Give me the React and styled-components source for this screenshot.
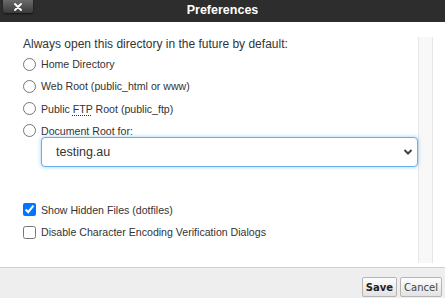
import React from "react";
import styled, { createGlobalStyle } from "styled-components";

const GlobalStyle = createGlobalStyle`
	html, body, #root {
		margin: 0;
		height: 100%;
	}
	body {
		font-family: "Liberation Sans", Arial, sans-serif;
		color: #333;
		background: #fff;
	}
`;

const Dialog = styled.div`
	display: flex;
	flex-direction: column;
	height: 100vh;
	overflow: hidden;
`;

//Title bar
const TitleBar = styled.div`
	display: grid;
	grid-template-columns: 1fr auto 1fr;
	align-items: start;
	height: 22px;
	background: #2d2d2d;
	flex-shrink: 0;
`;

const CloseButton = styled.button`
	justify-self: start;
	width: 30px;
	height: 13px;
	margin-left: 3px;
	padding: 0;
	border: 0;
	border-radius: 0 0 3px 3px;
	background: linear-gradient(#6a6a6a, #3a3a3a);
	box-shadow: 0 1px 2px rgba(0, 0, 0, 0.6);
	display: flex;
	align-items: center;
	justify-content: center;
	svg {
		display: block;
	}
`;

const Title = styled.h1`
	margin: 0;
	font-size: 12.5px;
	font-weight: bold;
	line-height: 21px;
	color: #fff;
`;

//Body
const Main = styled.div`
	flex: 1;
	display: flex;
	padding: 15px 0 4px;
	min-height: 0;
`;

const Content = styled.div`
	flex: 1;
	display: flex;
	flex-direction: column;
	padding-left: 23px;
`;

const Intro = styled.p`
	margin: 0;
	font-size: 12px;
	line-height: 14px;
`;

const Option = styled.label`
	display: flex;
	align-items: center;
	gap: 5px;
	min-height: 16px;
	margin-top: ${(p) => p.$gap || 6.3}px;
	font-size: 10.6px;
	input {
		width: 13px;
		height: 13px;
		margin: 0;
	}
`;

const Abbr = styled.abbr`
	text-decoration: underline dotted;
	text-underline-offset: 2px;
`;

const SelectWrap = styled.div`
	position: relative;
	margin: -2px 0 0 18px;
	svg {
		position: absolute;
		right: 5px;
		top: 11px;
		pointer-events: none;
	}
`;

const Select = styled.select`
	appearance: none;
	width: 100%;
	height: 30px;
	padding: 0 0 0 14px;
	border: 1px solid #66afe9;
	border-radius: 4px;
	box-shadow: 0 0 4px rgba(102, 175, 233, 0.6);
	background: #fff;
	font-family: "Liberation Sans", Arial, sans-serif;
	font-size: 12.5px;
	color: #333;
	outline: none;
`;

const Scrollbar = styled.div`
	width: 13px;
	margin-right: 12px;
	background: #f8f8f8;
	border-left: 1px solid #e6e6e6;
	border-right: 1px solid #e6e6e6;
`;

//Footer
const Footer = styled.div`
	height: 31px;
	flex-shrink: 0;
	display: flex;
	justify-content: flex-end;
	align-items: flex-start;
	gap: 3px;
	padding: 9px 3px 0 0;
	box-sizing: border-box;
	background: #eee;
	border-top: 1px solid #cfcfcf;
`;

const Button = styled.button`
	height: 20px;
	padding: 0 3px;
	border: 1px solid #b5b5b5;
	border-radius: 2px;
	background: linear-gradient(#fdfdfd, #e2e2e2);
	font-family: "DejaVu Sans", Verdana, sans-serif;
	font-size: 10px;
	font-weight: ${(p) => (p.$primary ? "bold" : "normal")};
	color: ${(p) => (p.$primary ? "#222" : "#444")};
`;

const App = () => {
	return (
		<Dialog>
			<GlobalStyle />
			<TitleBar>
				<CloseButton aria-label="Close">
					<svg width="8" height="8" viewBox="0 0 8 8">
						<path
							d="M1 1L7 7M7 1L1 7"
							stroke="#fff"
							strokeWidth="1.8"
							strokeLinecap="round"
						/>
					</svg>
				</CloseButton>
				<Title>Preferences</Title>
				<span />
			</TitleBar>
			<Main>
				<Content>
					<Intro>Always open this directory in the future by default:</Intro>
					<Option $gap={5}>
						<input type="radio" name="dir" />
						Home Directory
					</Option>
					<Option>
						<input type="radio" name="dir" />
						Web Root (public_html or www)
					</Option>
					<Option>
						<input type="radio" name="dir" />
						<span>
							Public <Abbr>FTP</Abbr> Root (public_ftp)
						</span>
					</Option>
					<Option>
						<input type="radio" name="dir" />
						Document Root for:
					</Option>
					<SelectWrap>
						<Select defaultValue="testing.au">
							<option>testing.au</option>
						</Select>
						<svg width="10" height="8" viewBox="0 0 10 8">
							<path
								d="M1.5 2L5 5.5L8.5 2"
								fill="none"
								stroke="#444"
								strokeWidth="2"
							/>
						</svg>
					</SelectWrap>
					<Option $gap={35}>
						<input type="checkbox" defaultChecked />
						Show Hidden Files (dotfiles)
					</Option>
					<Option>
						<input type="checkbox" />
						Disable Character Encoding Verification Dialogs
					</Option>
				</Content>
				<Scrollbar />
			</Main>
			<Footer>
				<Button $primary>Save</Button>
				<Button>Cancel</Button>
			</Footer>
		</Dialog>
	);
};

export default App;
